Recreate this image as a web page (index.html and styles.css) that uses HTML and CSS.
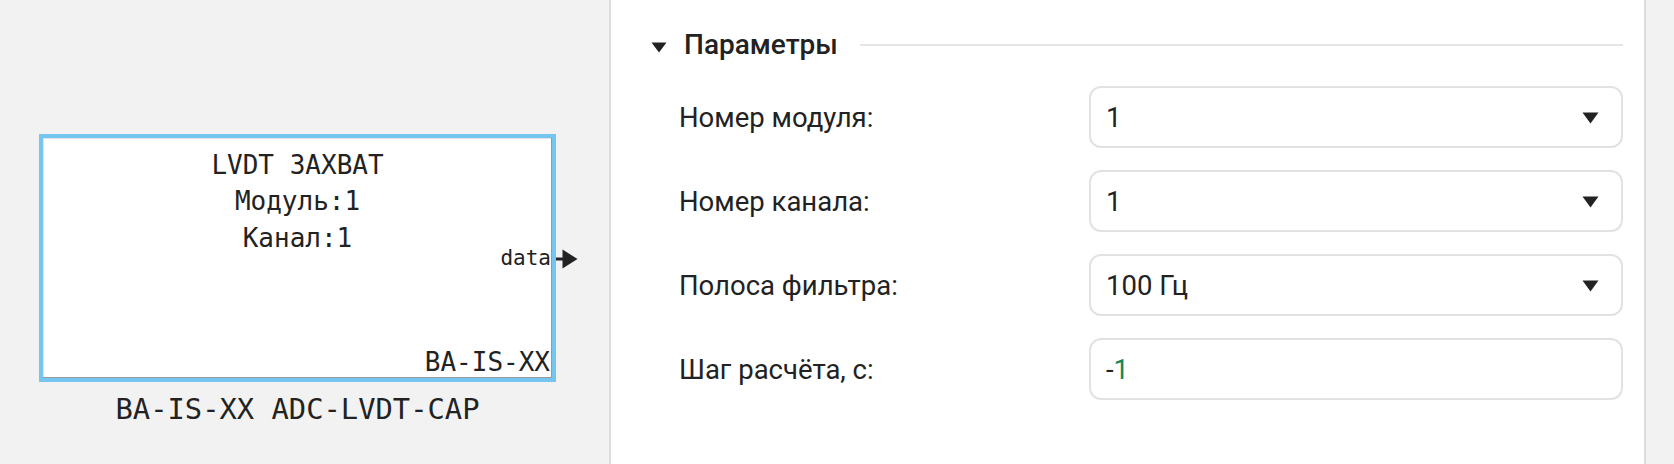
FILE: index.html
```html
<!DOCTYPE html>
<html lang="ru">
<head>
    <meta charset="UTF-8">
    <meta name="viewport" content="width=device-width, initial-scale=1.0">
    <title>ADC-LVDT-CAP</title>
    <link rel="stylesheet" href="styles.css">
</head>
<body>
    <div class="page">
        <div class="canvas">
            <div class="node">
                <div class="block">
                    <div class="block-title">
                        <div>LVDT ЗАХВАТ</div>
                        <div>Модуль:1</div>
                        <div>Канал:1</div>
                    </div>
                    <div class="port">data</div>
                    <svg class="port-arrow" width="22" height="20" viewBox="0 0 22 20">
                        <rect x="0" y="8.5" width="8" height="3" fill="#222"/>
                        <polygon points="6.5,0.5 21.5,10 6.5,19.5" fill="#222"/>
                    </svg>
                    <div class="block-lib">BA-IS-XX</div>
                </div>
                <div class="node-caption">BA-IS-XX ADC-LVDT-CAP</div>
            </div>
        </div>

        <div class="props">
            <div class="section-head">
                <svg class="caret" width="16" height="11" viewBox="0 0 16 11">
                    <polygon points="0.5,0.5 15.5,0.5 8,10.5" fill="#222"/>
                </svg>
                <span class="section-title">Параметры</span>
                <div class="section-line"></div>
            </div>

            <div class="form">
                <label class="field-label">Номер модуля:</label>
                <div class="field">
                    <span class="field-value">1</span>
                    <svg class="drop" width="17" height="12" viewBox="0 0 17 12">
                        <polygon points="0.5,0.5 16.5,0.5 8.5,11.5" fill="#222"/>
                    </svg>
                </div>

                <label class="field-label">Номер канала:</label>
                <div class="field">
                    <span class="field-value">1</span>
                    <svg class="drop" width="17" height="12" viewBox="0 0 17 12">
                        <polygon points="0.5,0.5 16.5,0.5 8.5,11.5" fill="#222"/>
                    </svg>
                </div>

                <label class="field-label">Полоса фильтра:</label>
                <div class="field">
                    <span class="field-value">100 Гц</span>
                    <svg class="drop" width="17" height="12" viewBox="0 0 17 12">
                        <polygon points="0.5,0.5 16.5,0.5 8.5,11.5" fill="#222"/>
                    </svg>
                </div>

                <label class="field-label">Шаг расчёта, с:</label>
                <div class="field">
                    <span class="field-value">-<span class="num">1</span></span>
                </div>
            </div>
        </div>

        <div class="side"></div>
    </div>
</body>
</html>
```

FILE: styles.css
```css
*{
    margin: 0;
    padding: 0;
    box-sizing: border-box;
}
html, body{
    height: 100%;
}
body{
    background-color: #f2f2f2;
    color: #222;
    font-family: Roboto, "Liberation Sans", sans-serif;
    overflow: hidden;
}
.page{
    display: flex;
    height: 100%;
}

/* diagram canvas */
.canvas{
    width: 609px;
    flex-shrink: 0;
    padding: 134px 0 0 39px;
}
.node{
    width: 517px;
    display: flex;
    flex-direction: column;
    align-items: center;
}
.block{
    position: relative;
    width: 517px;
    height: 248px;
    border: 4px solid #74c6f1;
    background-color: #fff;
    box-shadow: inset -1px -1px 0 #9a9a9a, inset 1px 1px 0 #e4e4e4;
    display: flex;
    flex-direction: column;
    font-family: "DejaVu Sans Mono", "Liberation Mono", monospace;
    font-size: 26px;
    color: #222;
}
.block-title{
    padding-top: 9px;
    text-align: center;
    line-height: 36.4px;
}
.port{
    position: absolute;
    top: 108px;
    right: 1px;
    font-size: 21px;
    line-height: 24px;
}
.port-arrow{
    position: absolute;
    top: 111px;
    left: 513px;
}
.block-lib{
    margin-top: auto;
    text-align: right;
    line-height: 30px;
    padding: 0 2px 1px 0;
}
.node-caption{
    margin-top: 10px;
    font-family: "DejaVu Sans Mono", "Liberation Mono", monospace;
    font-size: 28.8px;
    line-height: 34px;
    color: #222;
}

/* properties panel */
.props{
    flex: 1;
    background-color: #fff;
    border-left: 2px solid #dcdcdc;
    border-right: 2px solid #dcdcdc;
    padding: 28px 21px 0 40px;
}
.side{
    width: 28px;
    flex-shrink: 0;
}
.section-head{
    display: flex;
    align-items: center;
    height: 34px;
}
.caret{
    margin-top: 4px;
    margin-right: 17px;
}
.section-title{
    font-size: 28px;
    font-weight: 500;
    line-height: 34px;
    color: #222;
}
.section-line{
    flex: 1;
    height: 2px;
    margin-left: 22px;
    background-color: #e6e6e6;
}

.form{
    display: grid;
    grid-template-columns: 410px 1fr;
    row-gap: 22px;
    align-items: center;
    margin-top: 24px;
    padding-left: 28px;
}
.field-label{
    font-size: 27.5px;
    color: #222;
}
.field{
    height: 62px;
    border: 2px solid #e2e2e2;
    border-radius: 12px;
    display: flex;
    align-items: center;
    padding: 0 22px 0 15px;
}
.field-value{
    flex: 1;
    font-size: 27.5px;
    color: #222;
}
.num{
    color: #16865a;
}
.drop{
    margin-top: 2px;
}
```
